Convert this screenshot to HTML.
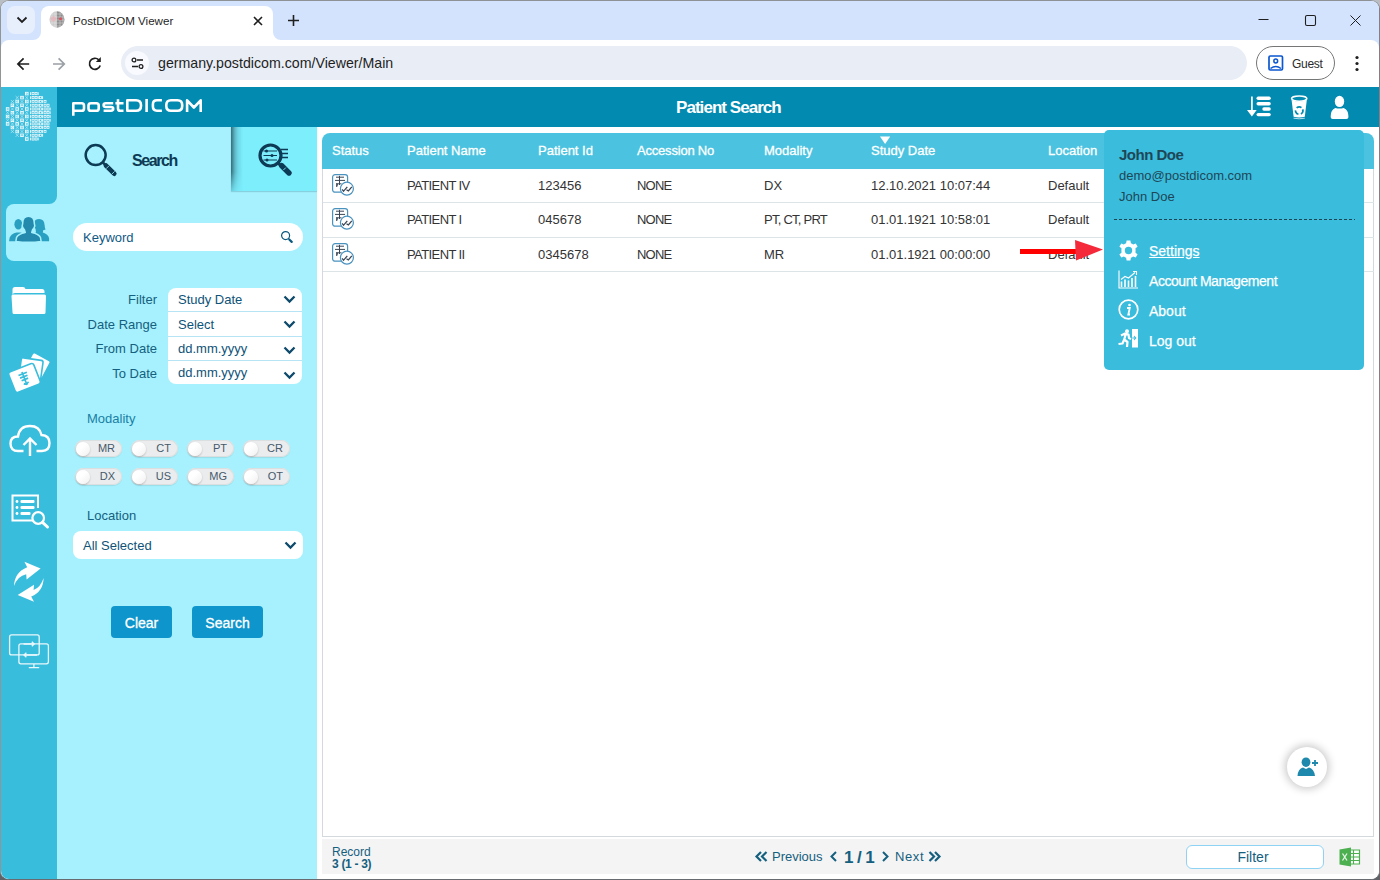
<!DOCTYPE html>
<html><head><meta charset="utf-8">
<style>
*{box-sizing:border-box;margin:0;padding:0}
html,body{width:1380px;height:880px;overflow:hidden;background:linear-gradient(180deg,#b9bec4 0,#b9bec4 50%,#5f6367 100%);font-family:"Liberation Sans",sans-serif}
.a{position:absolute}
.t{position:absolute;white-space:nowrap;line-height:1}
svg{position:absolute;overflow:visible}
#frame{position:absolute;left:0;top:0;width:1380px;height:880px;border:1px solid #8f9295;border-color:#8f9295 #7e8286 #686c70 #929496;border-radius:9px;overflow:hidden;background:#fff}
#app{position:absolute;left:0;top:86px;width:1378px;height:792px;background:#fff}
.lbl{position:absolute;white-space:nowrap;line-height:1;font-size:13px;color:#15607f;text-align:right}
.val{position:absolute;white-space:nowrap;line-height:1;font-size:13px;color:#0e5378}
.th{position:absolute;white-space:nowrap;line-height:1;font-size:13px;color:#fff;top:57px;-webkit-text-stroke:0.3px #fff}
.td{position:absolute;white-space:nowrap;line-height:1;font-size:13px;color:#333}
.sep{position:absolute;left:0;width:134px;height:1px;background:#b6e4f5}
.tog{position:absolute;width:47px;height:17px;border-radius:9px;background:#ebeced;box-shadow:inset 0 0 0 1px #dcdfe0,0 1px 1px rgba(0,0,0,.08)}
.tog i{position:absolute;left:1px;top:1.5px;width:14px;height:14px;border-radius:50%;background:linear-gradient(135deg,#fff 40%,#f0f0f0);box-shadow:0 1px 2px rgba(0,0,0,.22)}
.tog b{position:absolute;right:7px;top:3px;font-weight:normal;font-size:11px;line-height:11px;color:#455a6c}
.rsep{position:absolute;left:0;width:1051px;height:1px;background:#dde4e7}
.mi{position:absolute;white-space:nowrap;line-height:1;font-size:14px;color:#fff;left:45px;-webkit-text-stroke:0.25px #fff}
</style></head><body>
<div id="frame">
  <!-- ===== browser chrome ===== -->
  <div class="a" style="left:0;top:0;width:1378px;height:50px;background:#d3e3fd"></div>
  <div class="a" style="left:6px;top:5px;width:28px;height:28px;border-radius:8px;background:#e7effd"></div>
  <svg style="left:15px;top:15px" width="12" height="8" viewBox="0 0 12 8"><path d="M1.5 1.5 L6 6 L10.5 1.5" fill="none" stroke="#1f1f1f" stroke-width="1.8"/></svg>
  <!-- active tab -->
  <div class="a" style="left:40px;top:5px;width:232px;height:40px;border-radius:8px 8px 0 0;background:#fff"></div>
  <svg style="left:32px;top:31px" width="8" height="8" viewBox="0 0 8 8"><path d="M8 0 V8 H0 A8 8 0 0 0 8 0Z" fill="#fff"/></svg>
  <svg style="left:272px;top:31px" width="8" height="8" viewBox="0 0 8 8"><path d="M0 0 V8 H8 A8 8 0 0 1 0 0Z" fill="#fff"/></svg>
  <!-- favicon -->
  <svg style="left:48px;top:10px" width="16" height="17" viewBox="0 0 16 17">
    <defs><clipPath id="fc"><ellipse cx="8" cy="8.5" rx="7.5" ry="8.3"/></clipPath></defs>
    <g clip-path="url(#fc)"><rect x="0" y="0" width="8" height="17" fill="#c9c9c9"/><rect x="8" y="0" width="8" height="17" fill="#8e8e8e"/>
    <path d="M0 3H16M0 6H16M0 9H16M0 12H16M0 15H16M3 0V17M6 0V17M11 0V17M14 0V17" stroke="#eee" stroke-width=".6" opacity=".7"/>
    <circle cx="4.5" cy="7.8" r="2.6" fill="#eab0b6" opacity=".75"/><circle cx="11.5" cy="7.8" r="1.5" fill="#d9505c"/></g>
  </svg>
  <div class="t" style="left:72px;top:14px;font-size:11.6px;color:#1f1f1f">PostDICOM Viewer</div>
  <svg style="left:252px;top:15px" width="10" height="10" viewBox="0 0 10 10"><path d="M1 1L9 9M9 1L1 9" stroke="#1f1f1f" stroke-width="1.6"/></svg>
  <svg style="left:286px;top:13px" width="13" height="13" viewBox="0 0 13 13"><path d="M6.5 1V12M1 6.5H12" stroke="#1f1f1f" stroke-width="1.6"/></svg>
  <!-- window controls -->
  <svg style="left:1257px;top:18px" width="12" height="2" viewBox="0 0 12 2"><path d="M0.5 0.5H10.5" stroke="#1f1f1f" stroke-width="1"/></svg>
  <svg style="left:1304px;top:14px" width="12" height="12" viewBox="0 0 12 12"><rect x="0.5" y="0.5" width="10" height="10" rx="1.5" fill="none" stroke="#1f1f1f" stroke-width="1.1"/></svg>
  <svg style="left:1349px;top:14px" width="12" height="12" viewBox="0 0 12 12"><path d="M0.5 0.5L10.5 10.5M10.5 0.5L0.5 10.5" stroke="#1f1f1f" stroke-width="1"/></svg>

  <!-- toolbar -->
  <div class="a" style="left:0;top:39px;width:1378px;height:47px;background:#fff;border-radius:8px 8px 0 0"></div>
  <svg style="left:15px;top:55px" width="16" height="16" viewBox="0 0 16 16"><path d="M13.2 8H2M7.6 2.3L1.9 8L7.6 13.7" fill="none" stroke="#1f1f1f" stroke-width="1.7"/></svg>
  <svg style="left:51px;top:55px" width="16" height="16" viewBox="0 0 16 16"><path d="M1 8H12.2M6.6 2.3L12.3 8L6.6 13.7" fill="none" stroke="#9aa0a6" stroke-width="1.7"/></svg>
  <svg style="left:86px;top:55px" width="16" height="16" viewBox="0 0 16 16"><path d="M13.2 9.5A5.5 5.5 0 1 1 11.8 3.8" fill="none" stroke="#1f1f1f" stroke-width="1.7"/><path d="M13.8 1V6H8.8Z" fill="#1f1f1f"/></svg>
  <div class="a" style="left:120px;top:45px;width:1126px;height:34px;border-radius:17px;background:#e9eef6"></div>
  <div class="a" style="left:124px;top:50px;width:24px;height:24px;border-radius:12px;background:#f8faff"></div>
  <svg style="left:130px;top:56px" width="13" height="13" viewBox="0 0 13 13"><circle cx="3" cy="3" r="1.9" fill="none" stroke="#1f1f1f" stroke-width="1.3"/><path d="M6 3H12M1 9.5H7" stroke="#1f1f1f" stroke-width="1.4"/><circle cx="10" cy="9.5" r="1.9" fill="none" stroke="#1f1f1f" stroke-width="1.3"/></svg>
  <div class="t" style="left:157px;top:55px;font-size:14.2px;color:#1f1f1f">germany.postdicom.com/Viewer/Main</div>
  <div class="a" style="left:1255px;top:45px;width:79px;height:34px;border-radius:17px;border:1px solid #747775"></div>
  <svg style="left:1267px;top:54px" width="16" height="16" viewBox="0 0 16 16"><rect x="1" y="1" width="13.5" height="14" rx="1.3" fill="none" stroke="#0b57d0" stroke-width="1.7"/><circle cx="7.75" cy="6" r="1.9" fill="none" stroke="#0b57d0" stroke-width="1.5"/><path d="M2.5 13.5Q7.75 9.5 13 13.5" fill="none" stroke="#0b57d0" stroke-width="1.5"/></svg>
  <div class="t" style="left:1291px;top:57px;font-size:12px;color:#2a2a2a;letter-spacing:-0.3px">Guest</div>
  <svg style="left:1353px;top:54px" width="6" height="17" viewBox="0 0 6 17"><circle cx="3" cy="2.5" r="1.6" fill="#1f1f1f"/><circle cx="3" cy="8.5" r="1.6" fill="#1f1f1f"/><circle cx="3" cy="14.5" r="1.6" fill="#1f1f1f"/></svg>

  <!-- ===== app ===== -->
  <div id="app">
    <!-- sidebar -->
    <div class="a" style="left:0;top:0;width:56px;height:792px;background:#39bddc"></div>
    <!-- header -->
    <div class="a" style="left:56px;top:0;width:1322px;height:40px;background:#028ab0"></div>
    <!-- left panel -->
    <div class="a" style="left:56px;top:40px;width:260px;height:752px;background:#a6f1fd"></div>
    <div class="a" style="left:230px;top:40px;width:86px;height:64px;background:#7ceefc;box-shadow:0 1px 1px rgba(0,60,80,.18)"></div>
    <div class="a" style="left:230px;top:40px;width:12px;height:64px;background:linear-gradient(90deg,#356d78 0,#4a93a0 2px,#5db8c7 4px,#6fd6e6 7px,rgba(124,238,252,0) 12px);-webkit-mask-image:linear-gradient(180deg,#000 0,#000 70%,rgba(0,0,0,.25) 100%)"></div>
    
    <!-- logo -->
    <svg style="left:5px;top:5px" width="47" height="50" viewBox="0 0 47 50" id="logo"><g fill="#fff"><rect x="24.20" y="0.20" width="0.85" height="2.8"/><rect x="26.05" y="0.50" width="2.0" height="2.2" fill="none" stroke="#fff" stroke-width="0.7"/><rect x="29.05" y="0.50" width="2.0" height="2.2" fill="none" stroke="#fff" stroke-width="0.7"/><rect x="31.70" y="0.20" width="0.85" height="2.8"/><rect x="24.20" y="4.20" width="0.85" height="2.8"/><rect x="26.05" y="4.50" width="2.0" height="2.2" fill="none" stroke="#fff" stroke-width="0.7"/><rect x="29.05" y="4.50" width="2.0" height="2.2" fill="none" stroke="#fff" stroke-width="0.7"/><rect x="31.70" y="4.20" width="0.85" height="2.8"/><rect x="33.55" y="4.50" width="2.0" height="2.2" fill="none" stroke="#fff" stroke-width="0.7"/><rect x="36.20" y="4.20" width="0.85" height="2.8"/><rect x="24.20" y="8.10" width="0.85" height="2.8"/><rect x="26.05" y="8.40" width="2.0" height="2.2" fill="none" stroke="#fff" stroke-width="0.7"/><rect x="29.05" y="8.40" width="2.0" height="2.2" fill="none" stroke="#fff" stroke-width="0.7"/><rect x="31.70" y="8.10" width="0.85" height="2.8"/><rect x="33.55" y="8.40" width="2.0" height="2.2" fill="none" stroke="#fff" stroke-width="0.7"/><rect x="36.20" y="8.10" width="0.85" height="2.8"/><rect x="38.05" y="8.40" width="2.0" height="2.2" fill="none" stroke="#fff" stroke-width="0.7"/><rect x="24.20" y="11.90" width="0.85" height="2.8"/><rect x="26.05" y="12.20" width="2.0" height="2.2" fill="none" stroke="#fff" stroke-width="0.7"/><rect x="29.05" y="12.20" width="2.0" height="2.2" fill="none" stroke="#fff" stroke-width="0.7"/><rect x="31.70" y="11.90" width="0.85" height="2.8"/><rect x="33.55" y="12.20" width="2.0" height="2.2" fill="none" stroke="#fff" stroke-width="0.7"/><rect x="36.20" y="11.90" width="0.85" height="2.8"/><rect x="38.05" y="12.20" width="2.0" height="2.2" fill="none" stroke="#fff" stroke-width="0.7"/><rect x="41.05" y="12.20" width="2.0" height="2.2" fill="none" stroke="#fff" stroke-width="0.7"/><rect x="24.20" y="15.60" width="0.85" height="2.8"/><rect x="26.05" y="15.90" width="2.0" height="2.2" fill="none" stroke="#fff" stroke-width="0.7"/><rect x="29.05" y="15.90" width="2.0" height="2.2" fill="none" stroke="#fff" stroke-width="0.7"/><rect x="31.70" y="15.60" width="0.85" height="2.8"/><rect x="33.55" y="15.90" width="2.0" height="2.2" fill="none" stroke="#fff" stroke-width="0.7"/><rect x="36.20" y="15.60" width="0.85" height="2.8"/><rect x="38.05" y="15.90" width="2.0" height="2.2" fill="none" stroke="#fff" stroke-width="0.7"/><rect x="41.05" y="15.90" width="2.0" height="2.2" fill="none" stroke="#fff" stroke-width="0.7"/><rect x="43.70" y="15.60" width="0.85" height="2.8"/><rect x="24.20" y="19.30" width="0.85" height="2.8"/><rect x="26.05" y="19.60" width="2.0" height="2.2" fill="none" stroke="#fff" stroke-width="0.7"/><rect x="29.05" y="19.60" width="2.0" height="2.2" fill="none" stroke="#fff" stroke-width="0.7"/><rect x="31.70" y="19.30" width="0.85" height="2.8"/><rect x="33.55" y="19.60" width="2.0" height="2.2" fill="none" stroke="#fff" stroke-width="0.7"/><rect x="36.20" y="19.30" width="0.85" height="2.8"/><rect x="38.05" y="19.60" width="2.0" height="2.2" fill="none" stroke="#fff" stroke-width="0.7"/><rect x="41.05" y="19.60" width="2.0" height="2.2" fill="none" stroke="#fff" stroke-width="0.7"/><rect x="43.70" y="19.30" width="0.85" height="2.8"/><rect x="24.20" y="23.10" width="0.85" height="2.8"/><rect x="26.05" y="23.40" width="2.0" height="2.2" fill="none" stroke="#fff" stroke-width="0.7"/><rect x="29.05" y="23.40" width="2.0" height="2.2" fill="none" stroke="#fff" stroke-width="0.7"/><rect x="31.70" y="23.10" width="0.85" height="2.8"/><rect x="33.55" y="23.40" width="2.0" height="2.2" fill="none" stroke="#fff" stroke-width="0.7"/><rect x="36.20" y="23.10" width="0.85" height="2.8"/><rect x="38.05" y="23.40" width="2.0" height="2.2" fill="none" stroke="#fff" stroke-width="0.7"/><rect x="41.05" y="23.40" width="2.0" height="2.2" fill="none" stroke="#fff" stroke-width="0.7"/><rect x="43.70" y="23.10" width="0.85" height="2.8"/><rect x="24.20" y="26.90" width="0.85" height="2.8"/><rect x="26.05" y="27.20" width="2.0" height="2.2" fill="none" stroke="#fff" stroke-width="0.7"/><rect x="29.05" y="27.20" width="2.0" height="2.2" fill="none" stroke="#fff" stroke-width="0.7"/><rect x="31.70" y="26.90" width="0.85" height="2.8"/><rect x="33.55" y="27.20" width="2.0" height="2.2" fill="none" stroke="#fff" stroke-width="0.7"/><rect x="36.20" y="26.90" width="0.85" height="2.8"/><rect x="38.05" y="27.20" width="2.0" height="2.2" fill="none" stroke="#fff" stroke-width="0.7"/><rect x="41.05" y="27.20" width="2.0" height="2.2" fill="none" stroke="#fff" stroke-width="0.7"/><rect x="43.70" y="26.90" width="0.85" height="2.8"/><rect x="24.20" y="30.50" width="0.85" height="2.8"/><rect x="26.05" y="30.80" width="2.0" height="2.2" fill="none" stroke="#fff" stroke-width="0.7"/><rect x="29.05" y="30.80" width="2.0" height="2.2" fill="none" stroke="#fff" stroke-width="0.7"/><rect x="31.70" y="30.50" width="0.85" height="2.8"/><rect x="33.55" y="30.80" width="2.0" height="2.2" fill="none" stroke="#fff" stroke-width="0.7"/><rect x="36.20" y="30.50" width="0.85" height="2.8"/><rect x="38.05" y="30.80" width="2.0" height="2.2" fill="none" stroke="#fff" stroke-width="0.7"/><rect x="41.05" y="30.80" width="2.0" height="2.2" fill="none" stroke="#fff" stroke-width="0.7"/><rect x="24.20" y="34.10" width="0.85" height="2.8"/><rect x="26.05" y="34.40" width="2.0" height="2.2" fill="none" stroke="#fff" stroke-width="0.7"/><rect x="29.05" y="34.40" width="2.0" height="2.2" fill="none" stroke="#fff" stroke-width="0.7"/><rect x="31.70" y="34.10" width="0.85" height="2.8"/><rect x="33.55" y="34.40" width="2.0" height="2.2" fill="none" stroke="#fff" stroke-width="0.7"/><rect x="36.20" y="34.10" width="0.85" height="2.8"/><rect x="38.05" y="34.40" width="2.0" height="2.2" fill="none" stroke="#fff" stroke-width="0.7"/><rect x="41.05" y="34.40" width="2.0" height="2.2" fill="none" stroke="#fff" stroke-width="0.7"/><rect x="24.20" y="38.10" width="0.85" height="2.8"/><rect x="26.05" y="38.40" width="2.0" height="2.2" fill="none" stroke="#fff" stroke-width="0.7"/><rect x="29.05" y="38.40" width="2.0" height="2.2" fill="none" stroke="#fff" stroke-width="0.7"/><rect x="31.70" y="38.10" width="0.85" height="2.8"/><rect x="33.55" y="38.40" width="2.0" height="2.2" fill="none" stroke="#fff" stroke-width="0.7"/><rect x="36.20" y="38.10" width="0.85" height="2.8"/><rect x="38.05" y="38.40" width="2.0" height="2.2" fill="none" stroke="#fff" stroke-width="0.7"/><rect x="24.20" y="41.90" width="0.85" height="2.8"/><rect x="26.05" y="42.20" width="2.0" height="2.2" fill="none" stroke="#fff" stroke-width="0.7"/><rect x="29.05" y="42.20" width="2.0" height="2.2" fill="none" stroke="#fff" stroke-width="0.7"/><rect x="31.70" y="41.90" width="0.85" height="2.8"/><rect x="33.55" y="42.20" width="2.0" height="2.2" fill="none" stroke="#fff" stroke-width="0.7"/><rect x="36.20" y="41.90" width="0.85" height="2.8"/><rect x="24.20" y="45.60" width="0.85" height="2.8"/><rect x="26.05" y="45.90" width="2.0" height="2.2" fill="none" stroke="#fff" stroke-width="0.7"/><rect x="29.05" y="45.90" width="2.0" height="2.2" fill="none" stroke="#fff" stroke-width="0.7"/><rect x="31.70" y="45.60" width="0.85" height="2.8"/></g><g><rect x="19.50" y="0.30" width="2.6" height="2.6" fill="none" stroke="#fff" stroke-width="0.85"/><rect x="20.35" y="1.15" width="0.9" height="0.9" fill="#fff"/><path d="M9.60 4.00L12.80 7.20M12.80 4.00L9.60 7.20" stroke="#fff" stroke-width="0.6" opacity=".75"/><rect x="14.70" y="4.30" width="2.6" height="2.6" fill="none" stroke="#fff" stroke-width="0.85"/><rect x="15.55" y="5.15" width="0.9" height="0.9" fill="#fff"/><path d="M19.20 4.00L22.40 7.20M22.40 4.00L19.20 7.20" stroke="#fff" stroke-width="0.6" opacity=".75"/><path d="M4.80 7.90L8.00 11.10M8.00 7.90L4.80 11.10" stroke="#fff" stroke-width="0.6" opacity=".75"/><rect x="9.90" y="8.20" width="2.6" height="2.6" fill="none" stroke="#fff" stroke-width="0.85"/><rect x="10.75" y="9.05" width="0.9" height="0.9" fill="#fff"/><path d="M14.40 7.90L17.60 11.10M17.60 7.90L14.40 11.10" stroke="#fff" stroke-width="0.6" opacity=".75"/><rect x="19.50" y="8.20" width="2.6" height="2.6" fill="none" stroke="#fff" stroke-width="0.85"/><rect x="20.35" y="9.05" width="0.9" height="0.9" fill="#fff"/><rect x="5.10" y="12.00" width="2.6" height="2.6" fill="none" stroke="#fff" stroke-width="0.85"/><rect x="5.95" y="12.85" width="0.9" height="0.9" fill="#fff"/><path d="M9.60 11.70L12.80 14.90M12.80 11.70L9.60 14.90" stroke="#fff" stroke-width="0.6" opacity=".75"/><rect x="14.70" y="12.00" width="2.6" height="2.6" fill="none" stroke="#fff" stroke-width="0.85"/><rect x="15.55" y="12.85" width="0.9" height="0.9" fill="#fff"/><path d="M19.20 11.70L22.40 14.90M22.40 11.70L19.20 14.90" stroke="#fff" stroke-width="0.6" opacity=".75"/><rect x="0.30" y="15.70" width="2.6" height="2.6" fill="none" stroke="#fff" stroke-width="0.85"/><rect x="1.15" y="16.55" width="0.9" height="0.9" fill="#fff"/><path d="M4.80 15.40L8.00 18.60M8.00 15.40L4.80 18.60" stroke="#fff" stroke-width="0.6" opacity=".75"/><rect x="9.90" y="15.70" width="2.6" height="2.6" fill="none" stroke="#fff" stroke-width="0.85"/><rect x="10.75" y="16.55" width="0.9" height="0.9" fill="#fff"/><path d="M14.40 15.40L17.60 18.60M17.60 15.40L14.40 18.60" stroke="#fff" stroke-width="0.6" opacity=".75"/><rect x="19.50" y="15.70" width="2.6" height="2.6" fill="none" stroke="#fff" stroke-width="0.85"/><rect x="20.35" y="16.55" width="0.9" height="0.9" fill="#fff"/><path d="M-0.00 19.10L3.20 22.30M3.20 19.10L-0.00 22.30" stroke="#fff" stroke-width="0.6" opacity=".75"/><rect x="5.10" y="19.40" width="2.6" height="2.6" fill="none" stroke="#fff" stroke-width="0.85"/><rect x="5.95" y="20.25" width="0.9" height="0.9" fill="#fff"/><path d="M9.60 19.10L12.80 22.30M12.80 19.10L9.60 22.30" stroke="#fff" stroke-width="0.6" opacity=".75"/><rect x="14.70" y="19.40" width="2.6" height="2.6" fill="none" stroke="#fff" stroke-width="0.85"/><rect x="15.55" y="20.25" width="0.9" height="0.9" fill="#fff"/><path d="M19.20 19.10L22.40 22.30M22.40 19.10L19.20 22.30" stroke="#fff" stroke-width="0.6" opacity=".75"/><rect x="0.30" y="23.20" width="2.6" height="2.6" fill="none" stroke="#fff" stroke-width="0.85"/><rect x="1.15" y="24.05" width="0.9" height="0.9" fill="#fff"/><path d="M4.80 22.90L8.00 26.10M8.00 22.90L4.80 26.10" stroke="#fff" stroke-width="0.6" opacity=".75"/><rect x="9.90" y="23.20" width="2.6" height="2.6" fill="none" stroke="#fff" stroke-width="0.85"/><rect x="10.75" y="24.05" width="0.9" height="0.9" fill="#fff"/><path d="M14.40 22.90L17.60 26.10M17.60 22.90L14.40 26.10" stroke="#fff" stroke-width="0.6" opacity=".75"/><rect x="19.50" y="23.20" width="2.6" height="2.6" fill="none" stroke="#fff" stroke-width="0.85"/><rect x="20.35" y="24.05" width="0.9" height="0.9" fill="#fff"/><path d="M-0.00 26.70L3.20 29.90M3.20 26.70L-0.00 29.90" stroke="#fff" stroke-width="0.6" opacity=".75"/><rect x="5.10" y="27.00" width="2.6" height="2.6" fill="none" stroke="#fff" stroke-width="0.85"/><rect x="5.95" y="27.85" width="0.9" height="0.9" fill="#fff"/><path d="M9.60 26.70L12.80 29.90M12.80 26.70L9.60 29.90" stroke="#fff" stroke-width="0.6" opacity=".75"/><rect x="14.70" y="27.00" width="2.6" height="2.6" fill="none" stroke="#fff" stroke-width="0.85"/><rect x="15.55" y="27.85" width="0.9" height="0.9" fill="#fff"/><path d="M19.20 26.70L22.40 29.90M22.40 26.70L19.20 29.90" stroke="#fff" stroke-width="0.6" opacity=".75"/><rect x="0.30" y="30.60" width="2.6" height="2.6" fill="none" stroke="#fff" stroke-width="0.85"/><rect x="1.15" y="31.45" width="0.9" height="0.9" fill="#fff"/><path d="M4.80 30.30L8.00 33.50M8.00 30.30L4.80 33.50" stroke="#fff" stroke-width="0.6" opacity=".75"/><rect x="9.90" y="30.60" width="2.6" height="2.6" fill="none" stroke="#fff" stroke-width="0.85"/><rect x="10.75" y="31.45" width="0.9" height="0.9" fill="#fff"/><path d="M14.40 30.30L17.60 33.50M17.60 30.30L14.40 33.50" stroke="#fff" stroke-width="0.6" opacity=".75"/><rect x="19.50" y="30.60" width="2.6" height="2.6" fill="none" stroke="#fff" stroke-width="0.85"/><rect x="20.35" y="31.45" width="0.9" height="0.9" fill="#fff"/><rect x="5.10" y="34.20" width="2.6" height="2.6" fill="none" stroke="#fff" stroke-width="0.85"/><rect x="5.95" y="35.05" width="0.9" height="0.9" fill="#fff"/><path d="M9.60 33.90L12.80 37.10M12.80 33.90L9.60 37.10" stroke="#fff" stroke-width="0.6" opacity=".75"/><rect x="14.70" y="34.20" width="2.6" height="2.6" fill="none" stroke="#fff" stroke-width="0.85"/><rect x="15.55" y="35.05" width="0.9" height="0.9" fill="#fff"/><path d="M19.20 33.90L22.40 37.10M22.40 33.90L19.20 37.10" stroke="#fff" stroke-width="0.6" opacity=".75"/><path d="M4.80 37.90L8.00 41.10M8.00 37.90L4.80 41.10" stroke="#fff" stroke-width="0.6" opacity=".75"/><rect x="9.90" y="38.20" width="2.6" height="2.6" fill="none" stroke="#fff" stroke-width="0.85"/><rect x="10.75" y="39.05" width="0.9" height="0.9" fill="#fff"/><path d="M14.40 37.90L17.60 41.10M17.60 37.90L14.40 41.10" stroke="#fff" stroke-width="0.6" opacity=".75"/><rect x="19.50" y="38.20" width="2.6" height="2.6" fill="none" stroke="#fff" stroke-width="0.85"/><rect x="20.35" y="39.05" width="0.9" height="0.9" fill="#fff"/><path d="M9.60 41.70L12.80 44.90M12.80 41.70L9.60 44.90" stroke="#fff" stroke-width="0.6" opacity=".75"/><rect x="14.70" y="42.00" width="2.6" height="2.6" fill="none" stroke="#fff" stroke-width="0.85"/><rect x="15.55" y="42.85" width="0.9" height="0.9" fill="#fff"/><path d="M19.20 41.70L22.40 44.90M22.40 41.70L19.20 44.90" stroke="#fff" stroke-width="0.6" opacity=".75"/><rect x="19.50" y="45.70" width="2.6" height="2.6" fill="none" stroke="#fff" stroke-width="0.85"/><rect x="20.35" y="46.55" width="0.9" height="0.9" fill="#fff"/></g></svg>
    <svg style="left:71px;top:12px" width="132" height="18" viewBox="0 0 132 18">
      <g fill="none" stroke="#fff" stroke-width="2.6" stroke-linejoin="round">
        <path d="M1.3 16.8V4.2H9.7Q12 4.2 12 6.5V9.4Q12 11.7 9.7 11.7H1.3"/>
        <path d="M19 4.2H24.4Q26.7 4.2 26.7 6.5V9.4Q26.7 11.7 24.4 11.7H19Q16.5 11.7 16.5 9.4V6.5Q16.5 4.2 19 4.2Z"/>
        <path d="M41.2 4.2H33.8Q31.6 4.2 31.6 6.1Q31.6 8 33.8 8H39Q41.2 8 41.2 9.85Q41.2 11.7 39 11.7H31.6"/>
        <path d="M46 0.3V9.4Q46 11.7 48.3 11.7H51.5M43.4 4.2H51.5"/>
        <path d="M55.3 1.3H64Q69 1.3 69 6.3V6.7Q69 11.7 64 11.7H55.3Z"/>
        <path d="M74.6 0V13"/>
        <path d="M89.9 1.3H85Q80.9 1.3 80.9 5.4V7.6Q80.9 11.7 85 11.7H89.9"/>
        <path d="M99 1.3H105.5Q110.2 1.3 110.2 6V7Q110.2 11.7 105.5 11.7H99Q94.3 11.7 94.3 7V6Q94.3 1.3 99 1.3Z"/>
        <path d="M115.1 13V1.3L121.9 8.5L128.7 1.3V13"/>
      </g>
    </svg>
    <div class="t" style="left:675px;top:12px;font-size:17px;font-weight:bold;color:#fff;letter-spacing:-0.95px">Patient Search</div>
    <!-- header icons -->
    <svg style="left:1245px;top:9px" width="27" height="22" viewBox="0 0 27 22">
      <path d="M5.9 0.6V15" stroke="#fff" stroke-width="1.7"/><path d="M1 14H10.7L5.9 20.5Z" fill="#fff"/>
      <rect x="10.5" y="0.6" width="14.3" height="3.4" rx="1.7" fill="#fff"/><rect x="10.5" y="6.1" width="14.3" height="3.4" rx="1.7" fill="#fff"/>
      <rect x="16.3" y="11.3" width="8.5" height="3.4" rx="1.7" fill="#fff"/><rect x="10.5" y="16.9" width="14.3" height="3.4" rx="1.7" fill="#fff"/>
    </svg>
    <svg style="left:1289px;top:8px" width="19" height="25" viewBox="0 0 19 25">
      <ellipse cx="9.2" cy="3.6" rx="7.6" ry="2.6" fill="none" stroke="#fff" stroke-width="1.6"/>
      <path d="M1.6 5L3.6 21.8Q9.2 23 14.8 21.8L16.8 5Q9.2 8 1.6 5Z" fill="#fff"/>
      <circle cx="9.2" cy="15.6" r="3.7" fill="none" stroke="#028ab0" stroke-width="1.7" stroke-dasharray="5.2 2.5" transform="rotate(-20 9.2 15.6)"/>
      <path d="M3.5 23.2Q9.2 24.4 14.8 23.2" stroke="#fff" stroke-width="0.9" fill="none" opacity=".8"/>
    </svg>
    <svg style="left:1329px;top:9px" width="20" height="24" viewBox="0 0 20 24">
      <ellipse cx="9.5" cy="5.45" rx="4.7" ry="5.65" fill="#fff"/>
      <path d="M0.7 20Q0.7 13.6 5.3 11.9Q9.5 13.3 13.7 11.9Q18.4 13.6 18.4 20V21.2Q18.4 23 16.4 23H2.7Q0.7 23 0.7 21.2Z" fill="#fff"/>
    </svg>

    <!-- sidebar active item -->
    <div class="a" style="left:5px;top:117px;width:60px;height:57px;border-radius:8px 0 0 8px;background:#a6f1fd"></div>
    <svg style="left:48px;top:109px" width="8" height="8" viewBox="0 0 8 8"><path d="M8 0V8H0A8 8 0 0 0 8 0Z" fill="#a6f1fd"/></svg>
    <svg style="left:48px;top:174px" width="8" height="8" viewBox="0 0 8 8"><path d="M8 8V0H0A8 8 0 0 1 8 8Z" fill="#a6f1fd"/></svg>
    <!-- people icon -->
    <svg style="left:0px;top:117px" width="56" height="57" viewBox="1 204 56 57">
      <g fill="#29a0c1">
        <ellipse cx="18.3" cy="224.2" rx="3.9" ry="5.3"/>
        <path d="M9.1 241.2L9.6 237.8Q11 234 16.5 232.6H20.5Q26 234 27 237.5V241.2Z"/>
        <path d="M39.2 218.9Q44.3 219 44.6 225Q44.8 228.2 45.6 229.6L43.2 230.2L42.8 232.6Q48.2 234.2 49.1 238.2V241.2H30V237.5Q31 234 36 232.6L35.6 229.2Q33.6 226.6 34 223Q34.6 219 39.2 218.9Z"/>
      </g>
      <path fill="#2389ad" stroke="#a6f1fd" stroke-width="1.5" stroke-linejoin="round" d="M28.5 216.3C24.3 216.3 22.7 219.2 22.7 223.3L22.2 226Q23 228.6 24.4 229.7L25.3 232.4Q17.8 234 16.5 237.6L15.9 241.4Q28.5 243.2 41.1 241.4L40.5 237.6Q39.2 234 31.7 232.4L32.6 229.7Q34 228.6 34.8 226L34.3 223.3C34.3 219.2 32.7 216.3 28.5 216.3Z"/>
    </svg>
    <!-- folder -->
    <svg style="left:10px;top:199px" width="37" height="30" viewBox="0 0 37 30">
      <path d="M1.5 3.5Q1.5 1 4 1H12Q14 1 14.5 3H31Q33.5 3 33.5 5.5V7H4Q1.5 7 1.5 9Z" fill="#fff"/>
      <path d="M0.5 10Q0.5 8.5 2 8.5H33.5Q35 8.5 35 10L34.5 26.5Q34.5 28 33 28H3Q1.5 28 1.5 26.5Z" fill="#fff"/>
    </svg>
    <!-- xray cards -->
    <svg style="left:0px;top:0px" width="56" height="792" viewBox="1 87 56 792">
      <g fill="#fff" stroke="#39bddc" stroke-width="1.6">
        <rect x="-10" y="-10" width="20" height="20" rx="2" transform="translate(37.5 365.5) rotate(28)"/>
        <rect x="-11" y="-10" width="22" height="20" rx="2" transform="translate(31 369) rotate(8)"/>
        <rect x="-13.5" y="-11" width="27" height="22" rx="2.5" transform="translate(24.5 378) rotate(-21.5)"/>
      </g>
      <g transform="translate(24.5 378.5) rotate(-21.5)" stroke="#39bddc" fill="none" stroke-width="1.7">
        <path d="M0 -7V7M-4.5 -5H4.5M-4 -2H4M-3.5 1H3.5M-2.5 4.5Q0 7 2.5 4.5"/>
      </g>
    </svg>
    <!-- cloud upload -->
    <svg style="left:8px;top:336px" width="42" height="34" viewBox="0 0 42 34">
      <path d="M14.5 28H9Q1.5 28 1.5 20.5Q1.5 13.5 9 13.5Q10.5 3 21 3Q30.5 3 32.5 12Q40.5 12.5 40.5 20Q40.5 28 33 28H27.5" fill="none" stroke="#fff" stroke-width="2.4"/>
      <path d="M21 33V16M14.5 22L21 15.5L27.5 22" fill="none" stroke="#fff" stroke-width="2.4"/>
    </svg>
    <!-- list search -->
    <svg style="left:10px;top:407px" width="40" height="37" viewBox="0 0 40 37">
      <path d="M27 26.5H1.5V1.5H27V14" fill="none" stroke="#fff" stroke-width="2"/>
      <circle cx="6" cy="7.5" r="1.4" fill="#fff"/><circle cx="6" cy="13.5" r="1.4" fill="#fff"/><circle cx="6" cy="19.5" r="1.4" fill="#fff"/>
      <rect x="9.5" y="6" width="14" height="3" rx="1" fill="#fff"/><rect x="9.5" y="12" width="14" height="3" rx="1" fill="#fff"/><rect x="9.5" y="18" width="10" height="3" rx="1" fill="#fff"/>
      <circle cx="27.2" cy="24" r="5.8" fill="#39bddc" stroke="#fff" stroke-width="2.2"/>
      <path d="M31.5 28.3L36.5 33" stroke="#fff" stroke-width="3" stroke-linecap="round"/>
    </svg>
    <!-- sync arrows -->
    <svg style="left:0px;top:475px" width="56" height="45" viewBox="1 562 56 45">
      <path d="M14 586Q14.5 572.5 27.2 567.3L24.4 561.8L40.6 568.5L26.6 579.6L26.2 574.2Q17.5 576 14 586Z" fill="#fff"/>
      <path d="M43.6 578Q43.4 591.5 31.2 596.6L34 601.7L17.7 595L34 584.7L33.6 590Q40.5 587.5 43.6 578Z" fill="#fff"/>
    </svg>
    <!-- monitors -->
    <svg style="left:0px;top:545px" width="56" height="40" viewBox="1 632 56 40">
      <g fill="none" stroke="#eaf8fc" stroke-width="1.3">
        <rect x="9.6" y="634.9" width="29.6" height="20" rx="2"/>
        <rect x="18.9" y="643.8" width="29.5" height="20" rx="2"/>
        <path d="M33.9 664V667.6M28.8 667.6H39.2"/>
        <path d="M23.6 644H34.2M31.8 641.8L34.2 644L31.8 646.2"/>
        <path d="M37 655H24M26.4 652.8L24 655L26.4 657.2"/>
      </g>
    </svg>

    <!-- panel tab: Search -->
    <svg style="left:83px;top:57px" width="34" height="34" viewBox="0 0 34 34">
      <circle cx="11.65" cy="11.1" r="10" fill="none" stroke="#0d3a55" stroke-width="2.5"/>
      <path d="M18.5 18.2L21.5 21.2" stroke="#0d3a55" stroke-width="2.6"/>
      <path d="M22 21.6L30.2 29.6" stroke="#0d3a55" stroke-width="4.8" stroke-linecap="round"/>
      <path d="M24.9 21.9L22.1 24.7M30.6 27.4L27.8 30.2" stroke="#a6f1fd" stroke-width="0.8"/>
    </svg>
    <div class="t" style="left:131px;top:66px;font-size:16px;font-weight:bold;color:#0d3a55;letter-spacing:-1.4px">Search</div>
    <!-- panel tab 2: advanced search icon -->
    <svg style="left:257px;top:56px" width="34" height="34" viewBox="0 0 34 34">
      <circle cx="12.5" cy="12.5" r="10.5" fill="none" stroke="#0d3a55" stroke-width="3.2"/>
      <path d="M5.5 8H19M5.5 12.5H19M5.5 17H19" stroke="#0d3a55" stroke-width="1.1"/>
      <circle cx="8.5" cy="8" r="1.5" fill="#0d3a55"/><circle cx="14" cy="12.5" r="1.5" fill="#0d3a55"/><circle cx="9" cy="17" r="1.5" fill="#0d3a55"/>
      <path d="M23 6.5H30M24 10.5H30M24 14.5H30" stroke="#0d3a55" stroke-width="1.3"/>
      <path d="M20 20L23.5 23.5" stroke="#0d3a55" stroke-width="2.5"/>
      <path d="M23.5 22.5L31 30" stroke="#0d3a55" stroke-width="5.4" stroke-linecap="round"/>
      <path d="M27.8 24.6L25.4 27" stroke="#7ceefc" stroke-width="0.9"/>
    </svg>
    <!-- keyword -->
    <div class="a" style="left:72px;top:136px;width:230px;height:28px;border-radius:14px;background:#fff"></div>
    <div class="t" style="left:82px;top:144px;font-size:13px;color:#0f5a85">Keyword</div>
    <svg style="left:279px;top:144px" width="14" height="14" viewBox="0 0 14 14"><circle cx="5.6" cy="4.6" r="4" fill="none" stroke="#0b5a80" stroke-width="1.2"/><path d="M9.3 8.5L11.7 10.9" stroke="#0b5a80" stroke-width="2.2" stroke-linecap="round"/></svg>

    <!-- filter form -->
    <div class="lbl" style="left:56px;width:100px;top:206px">Filter</div>
    <div class="lbl" style="left:56px;width:100px;top:231px">Date Range</div>
    <div class="lbl" style="left:56px;width:100px;top:255px">From Date</div>
    <div class="lbl" style="left:56px;width:100px;top:280px">To Date</div>
    <div class="a" style="left:167px;top:201px;width:134px;height:96px;border-radius:8px;background:#fff;overflow:hidden">
      <div class="sep" style="top:23px"></div><div class="sep" style="top:48px"></div><div class="sep" style="top:72px"></div>
    </div>
    <div class="val" style="left:177px;top:206px">Study Date</div>
    <div class="val" style="left:177px;top:231px">Select</div>
    <div class="val" style="left:177px;top:255px">dd.mm.yyyy</div>
    <div class="val" style="left:177px;top:279px">dd.mm.yyyy</div>
    <svg style="left:282px;top:208px" width="13" height="9" viewBox="0 0 13 9"><path d="M1.5 1.5L6.5 6.5L11.5 1.5" fill="none" stroke="#0d4a6b" stroke-width="2.3"/></svg>
    <svg style="left:282px;top:233px" width="13" height="9" viewBox="0 0 13 9"><path d="M1.5 1.5L6.5 6.5L11.5 1.5" fill="none" stroke="#0d4a6b" stroke-width="2.3"/></svg>
    <svg style="left:282px;top:259px" width="13" height="9" viewBox="0 0 13 9"><path d="M1.5 1.5L6.5 6.5L11.5 1.5" fill="none" stroke="#0d4a6b" stroke-width="2.3"/></svg>
    <svg style="left:282px;top:284px" width="13" height="9" viewBox="0 0 13 9"><path d="M1.5 1.5L6.5 6.5L11.5 1.5" fill="none" stroke="#0d4a6b" stroke-width="2.3"/></svg>

    <!-- modality -->
    <div class="t" style="left:86px;top:325px;font-size:13px;color:#1a7fa5">Modality</div>
    <div class="tog" style="left:74px;top:353px"><i></i><b>MR</b></div>
    <div class="tog" style="left:130px;top:353px"><i></i><b>CT</b></div>
    <div class="tog" style="left:186px;top:353px"><i></i><b>PT</b></div>
    <div class="tog" style="left:242px;top:353px"><i></i><b>CR</b></div>
    <div class="tog" style="left:74px;top:381px"><i></i><b>DX</b></div>
    <div class="tog" style="left:130px;top:381px"><i></i><b>US</b></div>
    <div class="tog" style="left:186px;top:381px"><i></i><b>MG</b></div>
    <div class="tog" style="left:242px;top:381px"><i></i><b>OT</b></div>

    <!-- location -->
    <div class="t" style="left:86px;top:422px;font-size:13px;color:#15607f">Location</div>
    <div class="a" style="left:72px;top:444px;width:230px;height:28px;border-radius:8px;background:#fff"></div>
    <div class="t" style="left:82px;top:452px;font-size:13px;color:#0e5378">All Selected</div>
    <svg style="left:283px;top:453.5px" width="13" height="9" viewBox="0 0 13 9"><path d="M1.5 1.5L6.5 6.5L11.5 1.5" fill="none" stroke="#0d4a6b" stroke-width="2.3"/></svg>

    <!-- buttons -->
    <div class="a" style="left:110px;top:519px;width:61px;height:32px;border-radius:4px;background:#0e95cb"></div>
    <div class="t" style="left:110px;width:61px;text-align:center;top:529px;font-size:14px;color:#fff;-webkit-text-stroke:0.3px #fff">Clear</div>
    <div class="a" style="left:191px;top:519px;width:71px;height:32px;border-radius:4px;background:#0e95cb"></div>
    <div class="t" style="left:191px;width:71px;text-align:center;top:529px;font-size:14px;color:#fff;-webkit-text-stroke:0.3px #fff">Search</div>

    
    <!-- table -->
    <div class="a" style="left:321px;top:82px;width:1052px;height:668px;border:1px solid #d3d9dc;border-top:none;background:#fff"></div>
    <div class="a" style="left:321px;top:46px;width:1052px;height:36px;border-radius:8px 8px 0 0;background:#4bc3e0"></div>
    <div class="th" style="left:331px">Status</div>
    <div class="th" style="left:406px">Patient Name</div>
    <div class="th" style="left:537px">Patient Id</div>
    <div class="th" style="left:636px;letter-spacing:-0.2px">Accession No</div>
    <div class="th" style="left:763px">Modality</div>
    <div class="th" style="left:870px">Study Date</div>
    <div class="th" style="left:1047px">Location</div>
    <svg style="left:879px;top:49px" width="11" height="9" viewBox="0 0 11 9"><path d="M0 0.5H10.2L5.1 8Z" fill="#fff"/></svg>
<svg style="left:331px;top:87px" width="24" height="24" viewBox="0 0 24 24">
      <rect x="0.6" y="0.6" width="15" height="17.6" rx="2.5" fill="#fff" stroke="#4a92be" stroke-width="1.2"/>
      <path d="M4 3.2H12M3 6.4H13M4 9.8H9.5M7.5 1.8V11" stroke="#3a4654" stroke-width="1" fill="none"/>
      <path d="M4.3 9.5L4 13L5.5 12.5L6 9.8Z" fill="#3a4654"/>
      <circle cx="14.9" cy="14.7" r="6.5" fill="#fff" stroke="#4a92be" stroke-width="1.2"/>
      <path d="M10.2 15.4L11.5 17.3L15.3 12.8M14.5 15.8L16.4 17L19.8 12.9" stroke="#3a4654" stroke-width="1.3" fill="none"/>
    </svg>
    <div class="td" style="left:406px;top:92.3px;letter-spacing:-0.6px">PATIENT IV</div>
    <div class="td" style="left:537px;top:92.3px">123456</div>
    <div class="td" style="left:636px;top:92.3px;letter-spacing:-0.8px">NONE</div>
    <div class="td" style="left:763px;top:92.3px">DX</div>
    <div class="td" style="left:870px;top:92.3px">12.10.2021 10:07:44</div>
    <div class="td" style="left:1047px;top:92.3px">Default</div>
<svg style="left:331px;top:121px" width="24" height="24" viewBox="0 0 24 24">
      <rect x="0.6" y="0.6" width="15" height="17.6" rx="2.5" fill="#fff" stroke="#4a92be" stroke-width="1.2"/>
      <path d="M4 3.2H12M3 6.4H13M4 9.8H9.5M7.5 1.8V11" stroke="#3a4654" stroke-width="1" fill="none"/>
      <path d="M4.3 9.5L4 13L5.5 12.5L6 9.8Z" fill="#3a4654"/>
      <circle cx="14.9" cy="14.7" r="6.5" fill="#fff" stroke="#4a92be" stroke-width="1.2"/>
      <path d="M10.2 15.4L11.5 17.3L15.3 12.8M14.5 15.8L16.4 17L19.8 12.9" stroke="#3a4654" stroke-width="1.3" fill="none"/>
    </svg>
    <div class="td" style="left:406px;top:126.0px;letter-spacing:-0.6px">PATIENT I</div>
    <div class="td" style="left:537px;top:126.0px">045678</div>
    <div class="td" style="left:636px;top:126.0px;letter-spacing:-0.8px">NONE</div>
    <div class="td" style="left:763px;top:126.0px;letter-spacing:-0.75px">PT, CT, PRT</div>
    <div class="td" style="left:870px;top:126.0px">01.01.1921 10:58:01</div>
    <div class="td" style="left:1047px;top:126.0px">Default</div>
<svg style="left:331px;top:156px" width="24" height="24" viewBox="0 0 24 24">
      <rect x="0.6" y="0.6" width="15" height="17.6" rx="2.5" fill="#fff" stroke="#4a92be" stroke-width="1.2"/>
      <path d="M4 3.2H12M3 6.4H13M4 9.8H9.5M7.5 1.8V11" stroke="#3a4654" stroke-width="1" fill="none"/>
      <path d="M4.3 9.5L4 13L5.5 12.5L6 9.8Z" fill="#3a4654"/>
      <circle cx="14.9" cy="14.7" r="6.5" fill="#fff" stroke="#4a92be" stroke-width="1.2"/>
      <path d="M10.2 15.4L11.5 17.3L15.3 12.8M14.5 15.8L16.4 17L19.8 12.9" stroke="#3a4654" stroke-width="1.3" fill="none"/>
    </svg>
    <div class="td" style="left:406px;top:160.7px;letter-spacing:-0.6px">PATIENT II</div>
    <div class="td" style="left:537px;top:160.7px">0345678</div>
    <div class="td" style="left:636px;top:160.7px;letter-spacing:-0.8px">NONE</div>
    <div class="td" style="left:763px;top:160.7px">MR</div>
    <div class="td" style="left:870px;top:160.7px">01.01.1921 00:00:00</div>
    <div class="td" style="left:1047px;top:160.7px">Default</div>
    <div class="rsep" style="left:322px;top:115px"></div>
    <div class="rsep" style="left:322px;top:150px"></div>
    <div class="rsep" style="left:322px;top:184px"></div>
    <!-- red arrow -->
    <svg style="left:1018px;top:152px" width="86" height="22" viewBox="0 0 86 22">
      <path d="M1 12.5H58" stroke="#ff0000" stroke-width="5"/>
      <path d="M56 1L84 10.5L57 21.5Z" fill="#f42a3a"/>
    </svg>
    <!-- FAB -->
    <div class="a" style="left:1286px;top:660px;width:40px;height:40px;border-radius:50%;background:#fff;box-shadow:0 0 8px 2px rgba(0,0,0,.22)"></div>
    <svg style="left:1296px;top:670px" width="22" height="20" viewBox="0 0 22 20">
      <ellipse cx="9" cy="5.2" rx="4.4" ry="4.8" fill="#1f88ad"/>
      <path d="M0.5 19Q1 11.5 6 10.5L9 12L12 10.5Q17 11.5 18 19Z" fill="#1f88ad"/>
      <path d="M18 3V9M15 6H21" stroke="#1f88ad" stroke-width="1.8"/>
    </svg>
    <!-- footer -->
    <div class="a" style="left:321px;top:752px;width:1052px;height:35px;background:#f4f4f4"></div>
    <div class="t" style="left:331px;top:759px;font-size:12px;color:#15607f">Record</div>
    <div class="t" style="left:331px;top:771px;font-size:12px;font-weight:bold;color:#15607f;letter-spacing:-0.3px">3 (1 - 3)</div>
    <svg style="left:754px;top:764px" width="13" height="11" viewBox="0 0 13 11"><path d="M6 1L1.5 5.5L6 10M11.5 1L7 5.5L11.5 10" fill="none" stroke="#15607f" stroke-width="2.2"/></svg>
    <div class="t" style="left:771px;top:763px;font-size:13px;color:#15607f">Previous</div>
    <svg style="left:828px;top:764px" width="9" height="11" viewBox="0 0 9 11"><path d="M7 1L2.5 5.5L7 10" fill="none" stroke="#15607f" stroke-width="2"/></svg>
    <div class="t" style="left:843px;top:762px;font-size:17px;font-weight:bold;color:#15607f;letter-spacing:-0.6px">1 / 1</div>
    <svg style="left:880px;top:764px" width="9" height="11" viewBox="0 0 9 11"><path d="M2 1L6.5 5.5L2 10" fill="none" stroke="#15607f" stroke-width="2"/></svg>
    <div class="t" style="left:894px;top:763px;font-size:13px;color:#15607f;letter-spacing:0.6px">Next</div>
    <svg style="left:927px;top:764px" width="13" height="11" viewBox="0 0 13 11"><path d="M1.5 1L6 5.5L1.5 10M7 1L11.5 5.5L7 10" fill="none" stroke="#15607f" stroke-width="2.2"/></svg>
    <div class="a" style="left:1185px;top:758px;width:138px;height:24px;border-radius:6px;background:#fff;border:1px solid #8fd3f4"></div>
    <div class="t" style="left:1183px;width:138px;text-align:center;top:763px;font-size:14px;color:#15607f">Filter</div>
    <svg style="left:1338px;top:760px" width="22" height="20" viewBox="0 0 22 20">
      <path d="M9 3H20.5V17H9Z" fill="#fff" stroke="#4caf50" stroke-width="1.2"/>
      <path d="M9 6.5H20.5M9 10H20.5M9 13.5H20.5M14.5 3V17" stroke="#4caf50" stroke-width="1.1"/>
      <path d="M0.5 2.5L12 0.5V19.5L0.5 17.5Z" fill="#4caf50"/>
      <path d="M3.5 6.5L8 13.5M8 6.5L3.5 13.5" stroke="#e8f5e9" stroke-width="1.3"/>
    </svg>

    
    <!-- user menu -->
    <div class="a" style="left:1103px;top:43px;width:260px;height:240px;border-radius:5px;background:#3abcdd"></div>
    <div class="t" style="left:1118px;top:60px;font-size:15px;font-weight:bold;color:#1e4756;letter-spacing:-0.5px">John Doe</div>
    <div class="t" style="left:1118px;top:82px;font-size:13px;color:#1e4756">demo@postdicom.com</div>
    <div class="t" style="left:1118px;top:103px;font-size:13px;color:#1e4756">John Doe</div>
    <div class="a" style="left:1113px;top:132px;width:241px;height:1px;background:repeating-linear-gradient(90deg,#1e4756 0 3px,transparent 3px 5px)"></div>
    <svg style="left:1117px;top:153px" width="21" height="21" viewBox="0 0 21 21">
      <path fill="#fff" fill-rule="evenodd" d="M8.6 0.5H12.4L12.9 3.3Q14.1 3.8 15.1 4.5L17.7 3.4L19.6 6.6L17.4 8.4Q17.6 9.5 17.6 10.5Q17.6 11.5 17.4 12.6L19.6 14.4L17.7 17.6L15.1 16.5Q14.1 17.2 12.9 17.7L12.4 20.5H8.6L8.1 17.7Q6.9 17.2 5.9 16.5L3.3 17.6L1.4 14.4L3.6 12.6Q3.4 11.5 3.4 10.5Q3.4 9.5 3.6 8.4L1.4 6.6L3.3 3.4L5.9 4.5Q6.9 3.8 8.1 3.3ZM10.5 6.8A3.7 3.7 0 1 0 10.5 14.2A3.7 3.7 0 1 0 10.5 6.8Z"/>
    </svg>
    <div class="mi" style="left:1148px;top:157px;text-decoration:underline">Settings</div>
    <svg style="left:1117px;top:183px" width="21" height="19" viewBox="0 0 21 19">
      <path d="M1 0.5V18H20" fill="none" stroke="#fff" stroke-width="1.1"/>
      <path d="M3.5 17V11.5M7 17V9.5M10.5 17V10.5M14 17V8M17.5 17V6" stroke="#fff" stroke-width="1.6"/>
      <path d="M3 9.5L7 6.5L10.5 8L17 2.5" fill="none" stroke="#fff" stroke-width="1.1"/>
      <path d="M15 1.5H18.5V5" fill="none" stroke="#fff" stroke-width="1.1"/>
    </svg>
    <div class="mi" style="left:1148px;top:187px;letter-spacing:-0.45px">Account Management</div>
    <svg style="left:1117px;top:212px" width="21" height="21" viewBox="0 0 21 21">
      <circle cx="10.5" cy="10.5" r="9.3" fill="none" stroke="#fff" stroke-width="1.7"/>
      <circle cx="11.5" cy="6" r="1.3" fill="#fff"/>
      <path d="M9 9H11.8L10.3 15.5H12" fill="none" stroke="#fff" stroke-width="1.8"/>
    </svg>
    <div class="mi" style="left:1148px;top:217px">About</div>
    <svg style="left:1117px;top:242px" width="21" height="19" viewBox="0 0 21 19">
      <rect x="14" y="0" width="6" height="18.5" fill="#fff"/>
      <path d="M14.2 9H17.5M16 7L17.8 9L16 11" stroke="#3abcdd" stroke-width="1.1" fill="none"/>
      <circle cx="9" cy="2.2" r="2" fill="#fff"/>
      <path d="M3 6.5L7 4.5L10.5 5.5L11 9L13 10M7.8 5L6.2 10.5L9.5 13L9 18M6.2 10.5L4.5 14.5L0.5 15" fill="none" stroke="#fff" stroke-width="2.2" stroke-linejoin="round"/>
    </svg>
    <div class="mi" style="left:1148px;top:247px">Log out</div>

  </div>
</div>
</body></html>
